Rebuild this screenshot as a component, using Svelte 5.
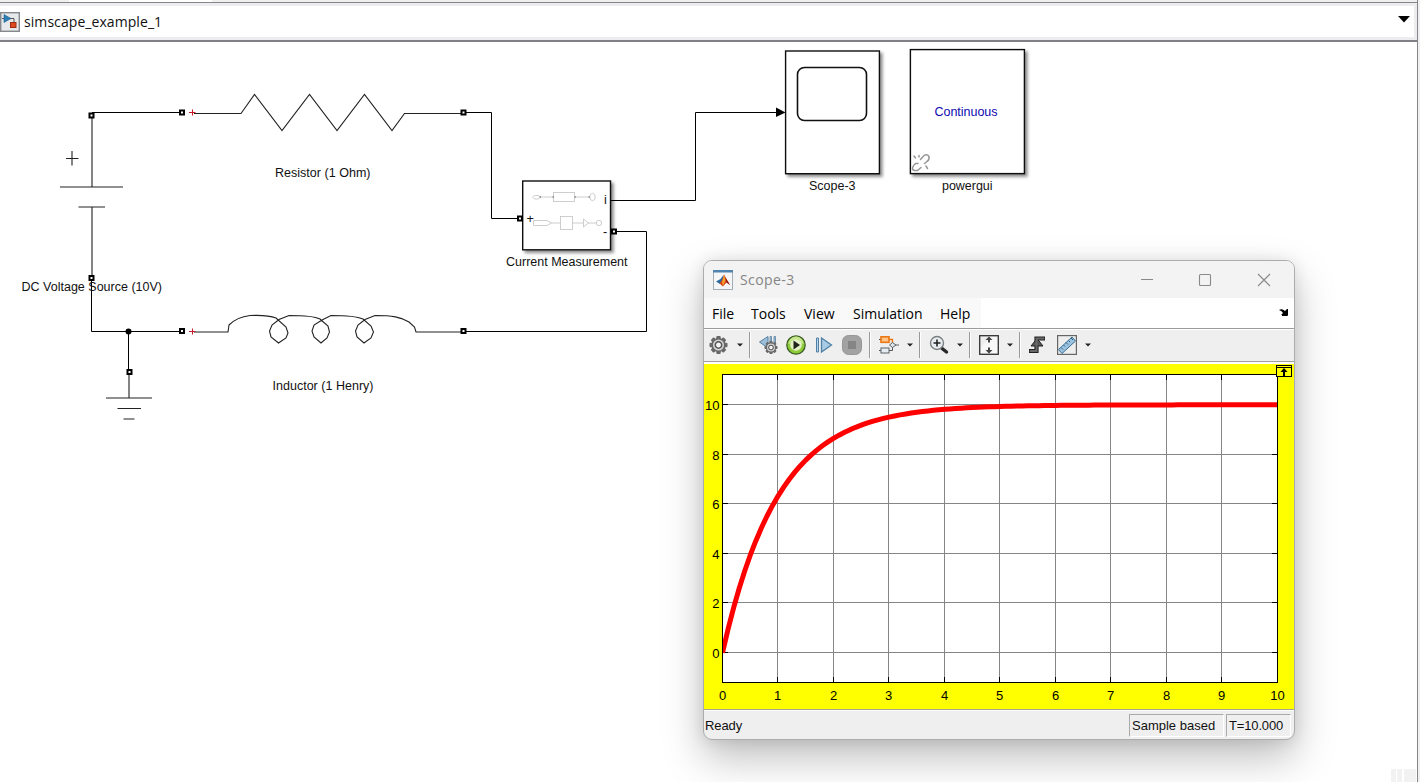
<script>
  const X0 = 722.5, X1 = 1277.5, Y0 = 652.5, YS = 24.8;
  const xTicks = Array.from({ length: 11 }, (_, i) => ({ n: i, x: Math.floor(X0 - 0.5 + i * 55.5) + 0.5 }));
  const yTicks = [0, 2, 4, 6, 8, 10].map((n) => ({ n, y: Math.round(Y0 - 0.5 - n * YS) + 0.5 }));
  const curve = Array.from({ length: 101 }, (_, i) => {
    const t = i / 10;
    return `${(X0 + t * 55.5).toFixed(2)},${(Y0 + 0.3 - 10 * (1 - Math.exp(-t)) * YS).toFixed(2)}`;
  }).join(' ');
  const ports = [[91.5, 115.5], [182, 112.5], [463.5, 112.5], [91.5, 278], [182, 331], [463.5, 331], [129.5, 372], [520, 218.5], [614, 231.5]];
  const teeth = [0, 45, 90, 135, 180, 225, 270, 315];
</script>

{#snippet arrow()}
  <span class="drop"><svg width="6" height="4" viewBox="0 0 6 4"><path d="M0 .5H6L3 3.5Z" fill="#222" /></svg></span>
{/snippet}
{#snippet sep()}<span class="sep"></span>{/snippet}
{#snippet gear(cx, cy, r)}
  <g transform="translate({cx} {cy}) scale({r / 9})">
    {#each teeth as a}<rect x="-2.2" y="-9" width="4.4" height="5" rx="1" fill="#686868" transform="rotate({a})" />{/each}
    <circle r="6.3" fill="#d4d4d4" stroke="#686868" stroke-width="1.6" />
    <circle r="3.2" fill="#f4f4f4" stroke="#555" stroke-width="1.5" />
  </g>
{/snippet}

<div class="page">
  <div class="tabs"><span></span></div>
  <header class="path">
    <svg class="model" width="20" height="20" viewBox="0 0 20 20">
      <rect x=".7" y=".7" width="18.6" height="18.6" fill="#e6e8ea" stroke="#85898c" stroke-width="1.4" />
      <path d="M2 6.500H5M10 6.500H14V11" fill="none" stroke="#555" />
      <path d="M4 2.500L11 6.500L4 10.500Z" fill="#2f7fb5" stroke="#1f608f" stroke-width=".6" />
      <rect x="10.500" y="10.500" width="5.500" height="5" fill="#dc4a22" stroke="#9f2c10" />
    </svg>
    <span class="name">simscape_example_1</span>
    <svg class="caret" width="12" height="7" viewBox="0 0 12 7"><path d="M0 0H12L6 6.5Z" /></svg>
  </header>

  <main>
    <svg class="diagram" width="1417" height="740" viewBox="0 42 1417 740">
      <defs>
        <filter id="blockShadow" x="-10%" y="-10%" width="125%" height="125%">
          <feDropShadow dx="2.5" dy="2.5" stdDeviation="1.5" flood-color="#000" flood-opacity=".45" />
        </filter>
      </defs>
      <g class="wire">
        <path d="M92 112.500H182M463 112.500H491.500V218.500H520M611 200.500H695.500V112.500H777M614 231.500H646.500V331.500H463M91.500 278V331.500H182M128.500 331V372" />
      </g>
      <g class="part">
        <path d="M92 116V187M60 187H123M78.500 207H105M92 207V278M66 158.500H78.500M72 151V165.500" />
        <path d="M194 113.500H241L254.500 94.500L282 130.500L309.500 94.500L337 130.500L364.500 94.500L392 130.500L404.500 113.500H462" />
        <path d="M194 332H228L229 325Q237 317 250 315.500C262 315 271 316 276 318L286 327L288 333L286 338L278.500 343L271 337L269.500 331L272 325L279 319.500L289 315.500C303 315.500 314 316 320 319L328 326L329.500 332L327 338L321 343L314 337L312 331L314 325L322 320L331 315.500C345 315.500 356 316 363 319L371 326L373.500 332L371 338L364 343L357 337L355.500 331L358 325L365 319.500L375 315.500C392 315.500 401 317 409 322L414.500 327L416 332H462" />
        <path d="M129 372V398M106 398H152M117.500 408.500H141M123.500 419H134.500" />
      </g>
      <circle cx="128.500" cy="331.500" r="3" />
      <path d="M776 107.500L785.500 112.500L776 117Z" />
      <path d="M189 112.500H195.500M192.500 109.500V115.500M189 331.500H195.500M192.500 328.500V334.500" stroke="#c71928" />
      <g fill="#fff" stroke="#111" stroke-width="1.4">
        <rect x="522.700" y="181" width="87.800" height="68.800" filter="url(#blockShadow)" />
        <rect x="785.600" y="51" width="93.800" height="122.700" filter="url(#blockShadow)" />
        <rect x="910.400" y="49.600" width="114" height="124" filter="url(#blockShadow)" />
        <rect x="797.500" y="67.500" width="69" height="53" rx="7" stroke-width="1.600" />
      </g>
      {#each ports as [x, y]}<rect x={x - 2} y={y - 2} width="4" height="4" fill="#fff" stroke="#000" stroke-width="2" />{/each}
      <g fill="none" stroke="#c2c2c2" stroke-width=".8">
        <path d="M540 197H554M574 197H590" />
        <path d="M532.500 197L534.500 195.500H538L541 197L538 199H534.500Z" />
        <rect x="553.500" y="192.500" width="21" height="9" />
        <ellipse cx="592.500" cy="197" rx="2.700" ry="3.700" />
        <path d="M533.500 220.500H547L551.500 223L547 225.500H533.500ZM551.500 223H560.500M572.500 223H583.500M588 223H596.500M583.500 219V227L588.500 223Z" />
        <rect x="560.500" y="216.500" width="12" height="13" />
        <circle cx="599" cy="223" r="2.700" />
      </g>
      <path d="M539.500 197h1.500M552.500 197h1.500M574.500 197h1.500M588.500 197h1.500" stroke="#666" />
      <g fill="none" stroke="#979797" stroke-width="1.500" stroke-linecap="round">
        <path d="M918 163.500H915.500Q913 165.500 912.500 168Q912.500 170.500 914.500 170.500H917.500L921 167.500" />
        <path d="M920.500 159.500L924 155.500Q927 153.500 929 156.500Q929.500 160 927 161.500L924.500 163.500M914 156L915.500 158M919 155.500V157M926 166L927.500 168.500" />
      </g>
      <g class="labels">
        <text x="275" y="177" textLength="95.500">Resistor (1 Ohm)</text>
        <text x="272.500" y="390" textLength="101">Inductor (1 Henry)</text>
        <text x="21.500" y="291" textLength="140.500">DC Voltage Source (10V)</text>
        <text x="506" y="266" textLength="121.500">Current Measurement</text>
        <text x="809" y="190" textLength="46.500">Scope-3</text>
        <text x="942" y="190" textLength="50.500">powergui</text>
        <text x="934.500" y="116" textLength="63" class="blue">Continuous</text>
        <text x="604" y="204">i</text>
        <text x="526.500" y="223">+</text>
        <text x="603" y="236">-</text>
      </g>
      <path d="M1391 769h5v13h-5zM1397 769h5v13h-5zM1404 769h12v13h-12z" fill="#f2f2f2" />
    </svg>

    <section class="window">
      <div class="titlebar">
        <svg width="20" height="20" viewBox="0 0 20 20">
          <rect x=".5" y=".5" width="19" height="19" fill="#f4f6f8" stroke="#a5adb5" />
          <rect width="20" height="2.500" fill="#4f83b0" />
          <path d="M3 11.500L7.500 9L10.500 5L9.500 13L7 14Z" fill="#276b9e" />
          <path d="M6.500 13.500L9 10L11 4.500L13 8L17 15L13.500 12.500L10 16.500Z" fill="#d9461c" />
          <path d="M11 5L12.500 10L10 16L9 12Z" fill="#f4a12d" />
          <path d="M12 7L17 15L13.500 12.500Z" fill="#8b1e14" />
        </svg>
        <span>Scope-3</span>
        <svg class="controls" width="130" height="14" viewBox="0 0 130 14" fill="none" stroke="#898989" stroke-width="1.100">
          <path d="M0 6.500H12M117 1L129 13M129 1L117 13" /><rect x="58.500" y="1.500" width="11" height="11" rx="1" />
        </svg>
      </div>
      <nav>
        <div class="menus"><span style:width="39px">File</span><span style:width="53px">Tools</span><span style:width="49px">View</span><span style:width="87px">Simulation</span><span>Help</span></div>
        <svg width="10" height="8" viewBox="0 0 10 8"><path d="M0 2Q3 0 6 3L8 1V7H2L4 5Q3 3 0 2Z" /><path d="M8.500 1V7.500H3" fill="none" stroke="#000" /></svg>
      </nav>
      <div class="tools">
        <svg width="20" height="20" viewBox="0 0 20 20">{@render gear(9.5, 10, 9)}</svg>
        {@render arrow()}{@render sep()}
        <div class="run">
          <svg width="20" height="20" viewBox="0 0 20 20">
            <path d="M1.500 7L10 1.500V13Z" fill="#9cc0dc" stroke="#557f9f" /><path d="M12 1.500H13.500V8H12ZM16 1.500H17.500V8H16Z" fill="#a8c8de" stroke="#557f9f" stroke-width=".8" />
            {@render gear(13, 12.5, 6.5)}
          </svg>
          <svg width="20" height="20" viewBox="0 0 20 20">
            <circle cx="10" cy="10" r="9.200" fill="#8dcc38" stroke="#3f5e28" stroke-width="1.300" /><path d="M2.500 9A7.500 7.500 0 0 1 17.500 9Q10 6 2.500 9Z" fill="#c5e68d" /><circle cx="10" cy="10" r="5.800" fill="#e3f0c3" /><path d="M7.500 5.500L14 10L7.500 14.500Z" fill="#20251d" />
          </svg>
          <svg width="20" height="20" viewBox="0 0 20 20">
            <path d="M2.500 3H4.500V17H2.500Z" fill="#b7d2e6" stroke="#4f80a5" /><path d="M7.500 3L17.500 10L7.500 17Z" fill="#a9cbe5" stroke="#4f80a5" stroke-width="1.300" />
          </svg>
          <svg width="20" height="20" viewBox="0 0 20 20"><rect x=".5" y=".5" width="19" height="19" rx="6" fill="#a2a2a2" stroke="#969696" /><rect x="6" y="6" width="8" height="8" fill="#858585" /></svg>
        </div>
        {@render sep()}
        <svg width="20" height="20" viewBox="0 0 20 20">
          <path d="M0 4.500H3M0 15.500H13.500V12" fill="none" stroke="#555" />
          <rect x="2" y="1.800" width="8" height="5.500" fill="#ffc287" stroke="#ec7611" stroke-width="1.600" /><path d="M10 4.500H13.500V8" fill="none" stroke="#ec7611" stroke-width="1.400" />
          <rect x="2" y="13" width="8" height="5" fill="#e7eef3" stroke="#5b6266" /><path d="M13.500 7.500L17 10L13.500 12.500L10.500 10ZM17 10H20" fill="#dfe6ea" stroke="#5b6266" />
        </svg>
        {@render arrow()}{@render sep()}
        <svg width="20" height="20" viewBox="0 0 20 20">
          <path d="M12.500 13L17.500 17" stroke="#292929" stroke-width="3.500" stroke-linecap="round" /><circle cx="8" cy="8" r="6.500" fill="#e7edf1" stroke="#7c8082" stroke-width="1.400" /><path d="M4.500 8H11.500M8 4.500V11.500" stroke="#222" stroke-width="1.600" />
        </svg>
        {@render arrow()}{@render sep()}
        <svg width="20" height="20" viewBox="0 0 20 20">
          <rect x=".7" y=".7" width="18.600" height="18.600" fill="#eee" stroke="#333" stroke-width="1.300" /><path d="M2 12L12 2H18V18H2Z" fill="#fff" opacity=".6" /><path d="M10 1.500L13.500 5H11V7.500H9V5H6.500ZM10 18.500L13.500 15H11V12.500H9V15H6.500Z" fill="#444" />
        </svg>
        {@render arrow()}{@render sep()}
        <svg class="trigger" width="20" height="20" viewBox="0 0 20 20">
          <path d="M2 16H9.500V3.500H18" fill="none" stroke="#222" stroke-width="4.200" /><path d="M10 3.500L16 11H4Z" fill="#555" stroke="#222" /><path d="M2.700 16H9.500V3.500H17.300" fill="none" stroke="#686868" stroke-width="2" />
        </svg>
        <svg class="measure" width="20" height="20" viewBox="0 0 20 20">
          <rect x=".6" y=".6" width="18.800" height="18.800" fill="#eee" stroke="#666" stroke-width="1.200" /><path d="M1.500 14.500L15 2L18.500 6L5 18.500Z" fill="#9bc3df" stroke="#376e94" /><path d="M4 12.500L6 14.500M6.500 10L8 11.500M9 7.500L11 9.500M11.500 5.500L13 7M14 3L16 5" stroke="#315f80" />
        </svg>
        {@render arrow()}
      </div>
      <svg class="plot" width="590" height="345" viewBox="704 364 590 345">
        <defs><clipPath id="axes"><rect x="723" y="375" width="554" height="307.500" /></clipPath></defs>
        <rect x="704" y="364" width="590" height="345" fill="#ff0" />
        <rect x={X0} y="374.500" width={X1 - X0} height="308" fill="#fff" />
        {#each xTicks.slice(1, 10) as t}<path d="M{t.x} 375V682" stroke="#858585" />{/each}
        {#each yTicks as t}<path d="M723 {t.y}H1277" stroke="#858585" />{/each}
        {#each xTicks.slice(1, 10) as t}<path d="M{t.x} 375V380M{t.x} 677V682" stroke="#000" />{/each}
        {#each yTicks as t}<path d="M723 {t.y}H728M1272 {t.y}H1277" stroke="#000" />{/each}
        <polyline points={curve} fill="none" stroke="#f00" stroke-width="5" stroke-linejoin="round" clip-path="url(#axes)" />
        <rect x={X0} y="374.500" width={X1 - X0} height="308" fill="none" stroke="#000" />
        {#each xTicks as t}<text x={t.x} y="700" text-anchor="middle">{t.n}</text>{/each}
        {#each yTicks as t}<text x="719.500" y={t.y + 5.5} text-anchor="end">{t.n}</text>{/each}
        <rect x="1276.500" y="365.500" width="15" height="11" fill="#ff0" stroke="#000" /><path d="M1277 367.500H1291" stroke="#000" /><path d="M1284 368L1287.500 372H1285V376H1283V372H1280.500Z" />
      </svg>
      <footer><span class="ready">Ready</span><span class="cell sample">Sample based</span><span class="cell time">T=10.000</span></footer>
    </section>
  </main>
</div>

<style>
  :global(body) { margin: 0; overflow: hidden; background: #f0f0f0; }
  .page { width: 1418px; height: 782px; box-sizing: border-box; display: flex; flex-direction: column; background: #fff; border-right: 1px solid #85868a; font-family: "Liberation Sans", Arial, sans-serif; }
  svg { display: block; flex: none; }
  .tabs { height: 3px; box-sizing: border-box; background: #efeff0; border-bottom: 1px solid #85868a; padding-left: 69px; }
  .tabs span { display: block; width: 143px; height: 2px; background: #fff; }
  .path { height: 39px; box-sizing: border-box; display: flex; align-items: center; border-bottom: 2px solid #808187; box-shadow: inset -3px 3px #ededf0, inset 0 -3px #ededf0; padding: 0 3px 0 1px; }
  .name { margin-left: 3px; font: 14px/20px "Open Sans", sans-serif; color: #111; letter-spacing: .07px; }
  .caret { margin: -4px 4px 0 auto; }
  main { position: relative; height: 740px; overflow: hidden; }
  .wire { fill: none; stroke: #000; }
  .part { fill: none; stroke: #222; stroke-width: 1.1; }
  .labels { font-size: 12.5px; fill: #111; }
  .labels .blue { fill: #0d09b0; }
  .window { position: absolute; left: 703px; top: 218px; width: 590px; height: 478px; border: 1px solid #aaadad; border-radius: 9px; overflow: hidden; background: #efefef; box-shadow: 0 18px 40px rgba(0,0,0,.25), 0 1px 16px rgba(0,0,0,.1); }
  .model { margin-left: -1px; }
  .model + .name { margin-left: 4px; }
  .titlebar { height: 37px; display: flex; align-items: center; background: #f3f3f3; padding-left: 9px; font: 14px "Open Sans", sans-serif; color: #858585; }
  .titlebar span { margin-left: 7px; letter-spacing: .4px; }
  .controls { margin-left: auto; margin-right: 23px; }
  nav { height: 31px; box-sizing: border-box; border-bottom: 1px solid #999b9d; display: flex; align-items: center; justify-content: space-between; background: #fff; padding-right: 5px; font: 14px/30px "Open Sans", sans-serif; color: #000; }
  nav > svg { margin-top: -3px; }
  .menus { display: flex; box-sizing: border-box; width: 277px; height: 30px; padding: 1px 0 0 8px; background: #f9f9f9; white-space: nowrap; line-height: 29px; }
  .tools { height: 35px; box-sizing: border-box; border-top: 1px solid #fff; border-bottom: 2px solid #fff; display: flex; align-items: center; padding: 0 0 2px 5px; background: #efefef; box-shadow: inset 0 -1px #a0a0a0; }
  .drop { width: 20px; display: flex; justify-content: center; padding-left: 1px; box-sizing: border-box; }
  .sep { width: 10px; height: 26px; box-sizing: border-box; border-left: 1px solid #999; box-shadow: inset 1px 0 #fff; }
  .run { display: flex; gap: 8px; margin: 0 7px 0 -1px; }
  .trigger { margin-left: -2px; }
  .measure { margin-left: 10px; }
  .plot { font-size: 13px; }
  footer { height: 30px; box-sizing: border-box; border-top: 1px solid #a5a58d; display: flex; align-items: center; padding: 1px 3px 0 1px; box-shadow: inset 0 1px #fff; font-size: 13px; color: #111; }
  .ready { flex: 1; letter-spacing: -.1px; }
  .cell { height: 23px; box-sizing: border-box; border: 1px solid; border-color: #aaa #fff #fff #aaa; line-height: 21px; padding-left: 2px; white-space: nowrap; }
  .sample { width: 95px; margin-right: 2px; letter-spacing: 0; }
  .time { width: 65px; letter-spacing: -.15px; }
</style>
